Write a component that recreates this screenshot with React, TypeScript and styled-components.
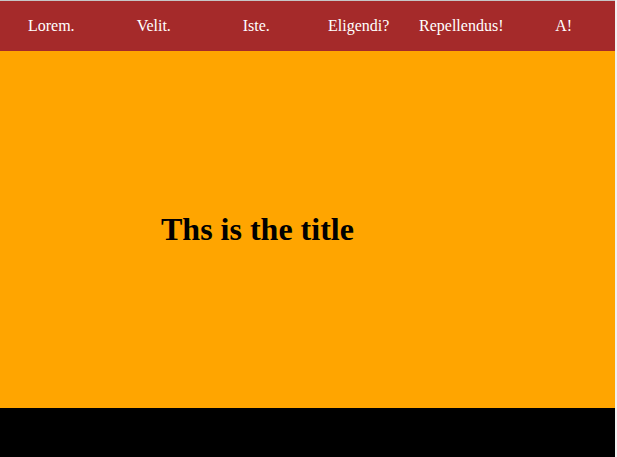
import styled, { createGlobalStyle } from 'styled-components';

const GlobalStyle = createGlobalStyle`
  html, body {
    margin: 0;
    padding: 0;
    background: #f0f0f0;
  }
  body {
    font-family: "Liberation Serif", "Times New Roman", serif;
  }
`;

const links = ['Lorem.', 'Velit.', 'Iste.', 'Eligendi?', 'Repellendus!', 'A!'];

const App: React.FC = () => {
  return (
    <>
      <GlobalStyle />
      <Page>
        <NavBar>
          {links.map((link) => (
            <NavItem key={link}>{link}</NavItem>
          ))}
        </NavBar>
        <Hero>
          <Title>Ths is the title</Title>
        </Hero>
        <Footer />
      </Page>
    </>
  );
};

const Page = styled.div`
  width: 615px;
  border-top: 1px solid #c6c6c6;
`;

const NavBar = styled.nav`
  display: flex;
  align-items: center;
  height: 50px;
  background-color: #a52a2a;
`;

const NavItem = styled.a`
  flex: 1;
  text-align: center;
  color: #fff;
  font-size: 16px;
  text-decoration: none;
`;

const Hero = styled.section`
  display: flex;
  align-items: center;
  height: 357px;
  padding-left: 161px;
  background-color: #ffa500;
`;

const Title = styled.h1`
  margin: 0;
  font-size: 32px;
  font-weight: bold;
  color: #000;
`;

const Footer = styled.footer`
  height: 49px;
  background-color: #000;
`;

export default App;
